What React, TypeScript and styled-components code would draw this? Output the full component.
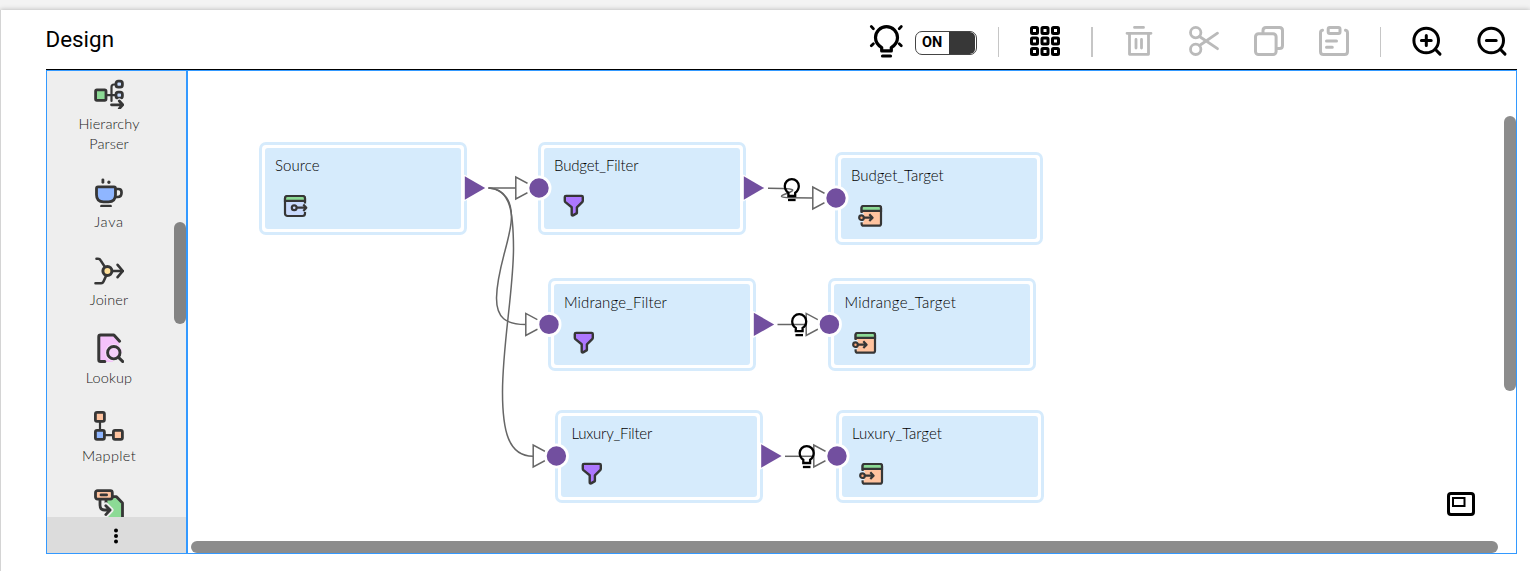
import React from "react";
import styled, { createGlobalStyle } from "styled-components";

const GlobalStyle = createGlobalStyle`
  * { box-sizing: border-box; }
  html, body { margin: 0; padding: 0; }
  body { background: #f3f3f3; font-family: Roboto, "Liberation Sans", sans-serif; overflow: hidden; }
  svg { display: block; flex: none; }
`;

const INK = "#363636";
const SKY = "#d6ebfc";
const PURPLE = "#724f9f";

const Page = styled.div`
  height: 571px;
  padding-top: 10px;
  overflow: hidden;
`;
const Sheet = styled.main`
  height: 561px;
  padding: 0 13px 17px 45px;
  background: #fff;
  border-left: 1px solid #d4d4d4;
  box-shadow: 0 0 5px rgba(0, 0, 0, 0.28);
  display: flex;
  flex-direction: column;
`;
const Header = styled.header`
  height: 60px;
  flex: none;
  display: flex;
  justify-content: space-between;
  border-bottom: 1px solid #000;
`;
const Title = styled.h1`
  margin: 0 0 0 -0.5px;
  font-size: 22.4px;
  font-weight: 400;
  line-height: 59px;
  color: #000;
`;
const Toolbar = styled.div`
  display: flex;
  align-items: center;
  height: 62px;
  margin-right: 7px;
`;
const Tool = styled.button<{ $gap?: number; $muted?: boolean }>`
  width: 36px;
  height: 36px;
  padding: 0;
  border: 0;
  background: none;
  margin-left: ${(p) => p.$gap ?? 29}px;
  color: ${(p) => (p.$muted ? "#bababa" : "#000")};
`;
const Separator = styled.span<{ $gap: number; $wide?: boolean }>`
  width: ${(p) => (p.$wide ? 2 : 1)}px;
  height: 30px;
  margin: 2px 0 0 ${(p) => p.$gap}px;
  background: #c6c6c6;
`;
const Toggle = styled.div`
  display: flex;
  width: 62px;
  height: 24px;
  margin: 4px 0 0 11px;
  border: 1px solid #444;
  border-radius: 7px;
  overflow: hidden;
  padding-right: 1px;
  font-size: 14.5px;
  font-weight: 700;
  line-height: 21px;
`;
const ToggleLabel = styled.span`
  width: 33px;
  padding-left: 6px;
`;
const ToggleKnob = styled.span`
  flex: 1;
  background: #373737;
  border-radius: 0 5px 5px 0;
`;

const Workspace = styled.div`
  flex: 1;
  display: flex;
  border: 1px solid #3399ff;
  min-height: 0;
`;
const Palette = styled.aside`
  width: 141px;
  flex: none;
  display: flex;
  flex-direction: column;
  border-right: 2px solid #3399ff;
  background: #eee;
`;
const PaletteScroll = styled.div`
  position: relative;
  flex: 1;
  min-height: 0;
  overflow: hidden;
  padding: 8px 15px 0 0;
`;
const PaletteItem = styled.div`
  display: flex;
  flex-direction: column;
  align-items: center;
  gap: 5px;
  margin-bottom: 23px;
`;
const PaletteLabel = styled.span<{ $spacing?: number }>`
  width: 80px;
  text-align: center;
  font: 300 14.5px/20px Lato, "Open Sans", sans-serif;
  letter-spacing: ${(p) => p.$spacing ?? 0.1}px;
  color: #222;
`;
const PaletteFooter = styled.div`
  height: 36px;
  flex: none;
  display: flex;
  align-items: center;
  justify-content: center;
  padding: 2px 2px 0 0;
  background: #dcdcdc;
`;
const PaletteThumb = styled.div`
  position: absolute;
  top: 151px;
  right: 0;
  width: 12px;
  height: 102px;
  border-radius: 6px;
  background: #838383;
`;

const Canvas = styled.section`
  position: relative;
  flex: 1;
  min-width: 0;
  overflow: hidden;
  background: #fff;
`;
const Overlay = styled.svg`
  position: absolute;
  inset: 0;
  pointer-events: none;
`;
const VerticalThumb = styled.div`
  position: absolute;
  top: 45px;
  right: 0;
  width: 12px;
  height: 275px;
  border-radius: 6px;
  background: #8c8c8c;
`;
const HorizontalThumb = styled.div`
  position: absolute;
  left: 3px;
  right: 18px;
  bottom: 0;
  height: 12px;
  border-radius: 6px;
  background: #8c8c8c;
`;
const MiniMap = styled.div`
  position: absolute;
  right: 41px;
  bottom: 37px;
`;

const NodeFrame = styled.article<{ $x: number; $y: number }>`
  position: absolute;
  left: ${(p) => p.$x - 188}px;
  top: ${(p) => p.$y - 71}px;
  width: 208px;
  height: 92.5px;
  padding: 3px;
  border: 3px solid ${SKY};
  border-radius: 7px;
  background: #fff;
`;
const NodeBody = styled.div<{ $drop: number }>`
  height: 100%;
  padding: ${(p) => 7 + p.$drop}px 0 0 10px;
  border-radius: 3px;
  background: ${SKY};
`;
const NodeTitle = styled.div<{ $spacing: number }>`
  letter-spacing: ${(p) => p.$spacing}px;
  white-space: nowrap;
  font: 300 15px/20px Lato, "Open Sans", sans-serif;
  color: #000;
`;
const NodeIcon = styled.div<{ $inset: number }>`
  padding: 19px 0 0 ${(p) => p.$inset}px;
`;

const Stroke = ({ children, size = 30 }: { children: React.ReactNode; size?: number }) => (
  <svg width={size} height={size} viewBox={`0 0 ${size} ${size}`} fill="none" stroke={INK} strokeWidth="2.8" strokeLinecap="round" strokeLinejoin="round">
    {children}
  </svg>
);

const HierarchyIcon = () => (
  <Stroke>
    <rect x="1.6" y="10.9" width="10.4" height="10.4" rx="1.3" fill="#8cda95" />
    <path d="M13 16.2h9M22 5.5h-2q-2.500 0-2.500 2.500v14" strokeWidth="2.2" />
    <rect x="22" y="2.2" width="6.400" height="6" rx="2.200" fill="#c8dcff" />
    <rect x="22" y="13.200" width="6.400" height="6" rx="2.200" fill="#c8dcff" />
    <path d="M17.500 25.800h11M25.300 22l3.400 3.800-3.400 3.800" stroke="#eee" strokeWidth="5" />
    <path d="M17.500 25.800h11M25.300 22l3.400 3.800-3.400 3.800" />
  </Stroke>
);
const JavaIcon = () => (
  <Stroke>
    <path d="M4 9.900h16q1.500 0 1.500 1.500v6.400q0 7-7 7h-5q-7 0-7-7v-6.400q0-1.500 1.500-1.500z" fill="#8fb6ff" />
    <path d="M22 12h2.500q3 0 3 3v1q0 4-4 4H22M7.500 29.200h9" strokeWidth="2.700" />
    <path d="M8.900 2.800v2.500" />
    <path d="M14.900 5.100v.2" strokeWidth="3.200" />
  </Stroke>
);
const JoinerIcon = () => (
  <Stroke>
    <path d="M2.500 3.800h1.500q1.800 0 2.800 1.800l4.500 7M1.500 28.200h5.600q1.600 0 2.300-1.500l2.500-5.500M18 16h11M23.600 9.800l5.200 6.200-5.200 6.200" strokeWidth="2.600" />
    <circle cx="13.400" cy="16" r="4.500" fill="#ffe09a" strokeWidth="3" />
  </Stroke>
);
const LookupIcon = () => (
  <Stroke>
    <path d="M4.800 1.800h14.400l6 6.200v21H4.800z" fill="#f5c2fb" stroke="none" />
    <circle cx="19.800" cy="19.800" r="8.800" fill="#f7dcfa" stroke="none" />
    <path d="M22 20l9 0v11H18z" fill="#eee" stroke="none" />
    <path d="M25.600 8.200l-5.700-6.100H6.600q-1.800 0-1.800 1.800v22.800q0 1.800 1.800 1.800h4.200" strokeWidth="3" />
    <circle cx="19.800" cy="19.700" r="6.200" fill="#f5d0fa" strokeWidth="2.900" />
    <path d="M24.500 24.400l4.300 4.200" strokeWidth="2.900" />
  </Stroke>
);
const MappletIcon = () => (
  <Stroke>
    <path d="M6 11v8M11 24.200h8" strokeWidth="2.200" />
    <rect x="1.400" y="1.400" width="9" height="9" rx="1.600" fill="#ffc39f" />
    <rect x="1.400" y="19.400" width="9" height="9" rx="1.600" fill="#8fb6ff" />
    <rect x="19.400" y="19.400" width="9" height="9" rx="1.600" fill="#ffc39f" />
  </Stroke>
);
const NormalizerIcon = () => (
  <Stroke>
    <path d="M12 7.700h10.500l6 6.300V32H12z" fill="#8cda95" />
    <path d="M6 11v6q0 4 4 4h6M12 16.500l4.500 4.500-4.500 4.800" stroke="#eee" strokeWidth="6" />
    <rect x="1.500" y="1.700" width="16.800" height="8.400" rx="2" fill="#ffc39f" />
    <path d="M6 11v5q0 5 4.500 5H16M11.800 16.800l4.300 4.200-4.300 4.600M7 5.900h5.600" />
  </Stroke>
);

const SourceIcon = () => (
  <svg width="26" height="24" viewBox="0 0 26 24" fill="none" stroke={INK} strokeWidth="2.200">
    <rect x="2" y="2" width="20" height="20" rx="2.500" fill="#c9dafc" />
    <path d="M2 6.800V4.500Q2 2 4.500 2h15Q22 2 22 4.500v2.300z" fill="#8cda95" />
    <path d="M13 13.700h11" stroke="#c9dafc" strokeWidth="5" />
    <path d="M22 9.500v8.400" stroke={SKY} strokeWidth="3" />
    <circle cx="11.200" cy="13.700" r="2.400" />
    <path d="M13.500 13.700h9.200M20.300 10.500l3 3.200-3 3.200" strokeLinejoin="round" />
  </svg>
);
const TargetIcon = () => (
  <svg width="26" height="24" viewBox="0 0 26 24" fill="none" stroke={INK} strokeWidth="2.200">
    <rect x="3.600" y="2" width="19.400" height="19.700" rx="2" fill="#ffc39f" />
    <path d="M3.600 6.800V4Q3.600 2 5.600 2H21q2 0 2 2v2.800z" fill="#8cda95" />
    <path d="M3.600 9v9.300" stroke={SKY} strokeWidth="4" />
    <circle cx="3.500" cy="13.700" r="2.300" fill="#ffa978" />
    <path d="M5.800 13.700h8.400M11.300 10.300l3.300 3.400-3.300 3.400" strokeLinejoin="round" />
  </svg>
);
const FilterIcon = () => (
  <svg width="26" height="24" viewBox="0 0 26 24" fill="#ad77ff" stroke={INK} strokeWidth="2.400" strokeLinejoin="round">
    <path d="M3 1.900h15.600q1.200 0 1.200 1.200v3.600q0 .8-.6 1.400l-5.300 5.200v5.800l-3.800 2.300q-1.400.3-1.400-1.200v-6.900L2.400 8.100q-.6-.6-.6-1.400V3.100q0-1.200 1.200-1.200z" />
  </svg>
);

const Svg36 = ({ children, width = 2.8 }: { children: React.ReactNode; width?: number }) => (
  <svg width="36" height="36" viewBox="0 0 36 36" fill="none" stroke="currentColor" strokeWidth={width} strokeLinecap="round" strokeLinejoin="round">
    {children}
  </svg>
);
const BulbIcon = () => (
  <Svg36 width={3.2}>
    <path d="M13.200 27.700v-3.300q-6.200-3.600-6.200-10a11 11 0 0 1 22 0q0 6.400-6.200 10v3.300z" transform="translate(.5 .2)" />
    <path d="M14.500 33h8" />
    <path d="M3.300 3.600l2.100 2.100M33.300 3.600l-2.100 2.100M3.300 22.800l2.100-2.100M33.300 22.800l-2.100-2.100" strokeWidth="2.800" />
  </Svg36>
);
const GridIcon = () => (
  <Svg36 width={3}>
    {[4.5, 15, 25.5].map((y) =>
      [4.5, 15, 25.5].map((x) => <rect key={`${x}-${y}`} x={x} y={y} width="6" height="6" rx="1" />)
    )}
  </Svg36>
);
const TrashIcon = () => (
  <Svg36>
    <path d="M13.500 4.400h9M6 10.300h24M8.500 11v20.300h19V11M15 16.500v8.500M20.500 16.500v8.500" />
  </Svg36>
);
const ScissorsIcon = () => (
  <Svg36>
    <circle cx="9.700" cy="9.600" r="5.200" />
    <circle cx="9.700" cy="26.300" r="5.200" />
    <path d="M13.500 13.500l18 12.200M13.500 22.500l18-12.300" />
  </Svg36>
);
const CopyIcon = () => (
  <Svg36 width={3}>
    <rect x="4.500" y="10.800" width="20.600" height="20.700" rx="3" />
    <path d="M12 9.500V7.500q0-3 3-3h13.500q3 0 3 3v15q0 3-3 3h-2" />
  </Svg36>
);
const PasteIcon = () => (
  <Svg36 width={3}>
    <path d="M6.500 7.300q-2 .3-2 2.700v18.500q0 3 3 3h21q3 0 3-3V10q0-2.400-2-2.700" />
    <rect x="12.200" y="4.500" width="11.800" height="6" rx="1.500" />
    <path d="M10.500 18h10M10.500 24.300h5.800" />
  </Svg36>
);
const ZoomIcon = ({ plus }: { plus?: boolean }) => (
  <Svg36 width={3}>
    <circle cx="17.200" cy="17.500" r="12.300" />
    <path d={`M26.500 26.500l4.500 4.600M12.400 17.500h9.800${plus ? "M17.300 12.600v9.800" : ""}`} />
  </Svg36>
);

const paletteItems: { label?: string; spacing?: number; icon: React.ReactNode }[] = [
  { label: "Hierarchy Parser", icon: <HierarchyIcon /> },
  { label: "Java", spacing: 0.7, icon: <JavaIcon /> },
  { label: "Joiner", icon: <JoinerIcon /> },
  { label: "Lookup", icon: <LookupIcon /> },
  { label: "Mapplet", spacing: 0.35, icon: <MappletIcon /> },
  { icon: <NormalizerIcon /> },
];

type Kind = "source" | "filter" | "target";
const nodes: { name: string; kind: Kind; x: number; y: number; spacing: number; drop?: number }[] = [
  { name: "Source", kind: "source", x: 259, y: 142, spacing: 0.1 },
  { name: "Budget_Filter", kind: "filter", x: 538, y: 142, spacing: -0.16 },
  { name: "Midrange_Filter", kind: "filter", x: 548, y: 278.4, spacing: 0.12, drop: 0.7 },
  { name: "Luxury_Filter", kind: "filter", x: 555.4, y: 410, spacing: -0.22 },
  { name: "Budget_Target", kind: "target", x: 835, y: 152, spacing: 0 },
  { name: "Midrange_Target", kind: "target", x: 828.4, y: 278.4, spacing: 0.28, drop: 0.7 },
  { name: "Luxury_Target", kind: "target", x: 836, y: 410, spacing: 0 },
];
const kindIcon = { source: <SourceIcon />, filter: <FilterIcon />, target: <TargetIcon /> };
const iconInset = { source: 7.6, filter: 9.2, target: 7.4 };

const links = [
  "M488.500 188H516",
  "M488.500 188C505 189 512.500 202 511.300 220C510 242 497 268 496.500 298C496.500 318 506 324.500 525.600 324.500",
  "M488.500 188C511 189 513.300 213 513.500 248C513.500 290 502.500 345 502.500 392C502.500 430 508 456.300 533 456.300",
  "M768 188.200L782 188.400C795 188.500 795 190.500 788 193C778 196.500 780 197.600 791 197.700L812.700 198",
  "M777.500 324.500H805",
  "M785 456.300H812",
];
const bulbs = [[791.8, 177.8], [799.2, 312.9], [806.7, 444.8]];

const Links = () => (
  <Overlay width="1328" height="482" viewBox="188 71 1328 482" fill="none">
    <g stroke="#666" strokeWidth="1.500">
      {links.map((d) => <path key={d} d={d} />)}
      {nodes.filter((n) => n.kind !== "source").map((n) => (
        <path key={n.name} d={`M${n.x - 22.2} ${n.y + 35}v22l20.500-11z`} fill="none" />
      ))}
    </g>
    {bulbs.map(([x, y]) => (
      <g key={x} transform={`translate(${x} ${y})`} stroke="#000" strokeWidth="2.300">
        <path d="M-3.400 18.200v-3.200q-3.600-2.300-3.600-6.700a7 7 0 0 1 14 0q0 4.400-3.600 6.700v3.200z" />
        <path d="M-3.800 22.200h7.600" />
      </g>
    ))}
  </Overlay>
);

const Ports = () => (
  <Overlay width="1328" height="482" viewBox="188 71 1328 482">
    {nodes.map((n) => (
      <g key={n.name} fill={PURPLE}>
        {n.kind !== "source" && (
          <circle cx={n.x + 1} cy={n.y + 46} r="11.100" stroke="#fff" strokeWidth="2.800" />
        )}
        {n.kind !== "target" && (
          <>
            <path d={`M${n.x + 203} ${n.y + 31.5}v29l6-3v-23z`} fill="#fff" />
            <path d={`M${n.x + 205.8} ${n.y + 34.3}v23.400l20.400-11.700z`} />
          </>
        )}
      </g>
    ))}
  </Overlay>
);

export default function App() {
  return (
    <Page>
      <GlobalStyle />
      <Sheet>
        <Header>
          <Title>Design</Title>
          <Toolbar>
            <Tool $gap={0}><BulbIcon /></Tool>
            <Toggle>
              <ToggleLabel>ON</ToggleLabel>
              <ToggleKnob />
            </Toggle>
            <Separator $gap={21} />
            <Tool $gap={28}><GridIcon /></Tool>
            <Separator $gap={28} $wide />
            <Tool $gap={28} $muted><TrashIcon /></Tool>
            <Tool $muted><ScissorsIcon /></Tool>
            <Tool $muted><CopyIcon /></Tool>
            <Tool $muted><PasteIcon /></Tool>
            <Separator $gap={28} />
            <Tool $gap={28}><ZoomIcon plus /></Tool>
            <Tool><ZoomIcon /></Tool>
          </Toolbar>
        </Header>
        <Workspace>
          <Palette>
            <PaletteScroll>
              {paletteItems.map((item, index) => (
                <PaletteItem key={index}>
                  {item.icon}
                  {item.label && <PaletteLabel $spacing={item.spacing}>{item.label}</PaletteLabel>}
                </PaletteItem>
              ))}
              <PaletteThumb />
            </PaletteScroll>
            <PaletteFooter>
              <svg width="4" height="16" viewBox="0 0 4 16">
                <circle cx="2" cy="2.500" r="2" />
                <circle cx="2" cy="8" r="2" />
                <circle cx="2" cy="13.500" r="2" />
              </svg>
            </PaletteFooter>
          </Palette>
          <Canvas>
            <Links />
            {nodes.map((n) => (
              <NodeFrame key={n.name} $x={n.x} $y={n.y}>
                <NodeBody $drop={n.drop ?? 0}>
                  <NodeTitle $spacing={n.spacing}>{n.name}</NodeTitle>
                  <NodeIcon $inset={iconInset[n.kind]}>{kindIcon[n.kind]}</NodeIcon>
                </NodeBody>
              </NodeFrame>
            ))}
            <Ports />
            <MiniMap>
              <svg width="28" height="24" viewBox="0 0 28 24" fill="none" stroke="#000">
                <rect x="1.500" y="1.500" width="25" height="21" rx="2.500" strokeWidth="3" />
                <rect x="6" y="6" width="11.500" height="8" strokeWidth="2" />
              </svg>
            </MiniMap>
            <VerticalThumb />
            <HorizontalThumb />
          </Canvas>
        </Workspace>
      </Sheet>
    </Page>
  );
}
